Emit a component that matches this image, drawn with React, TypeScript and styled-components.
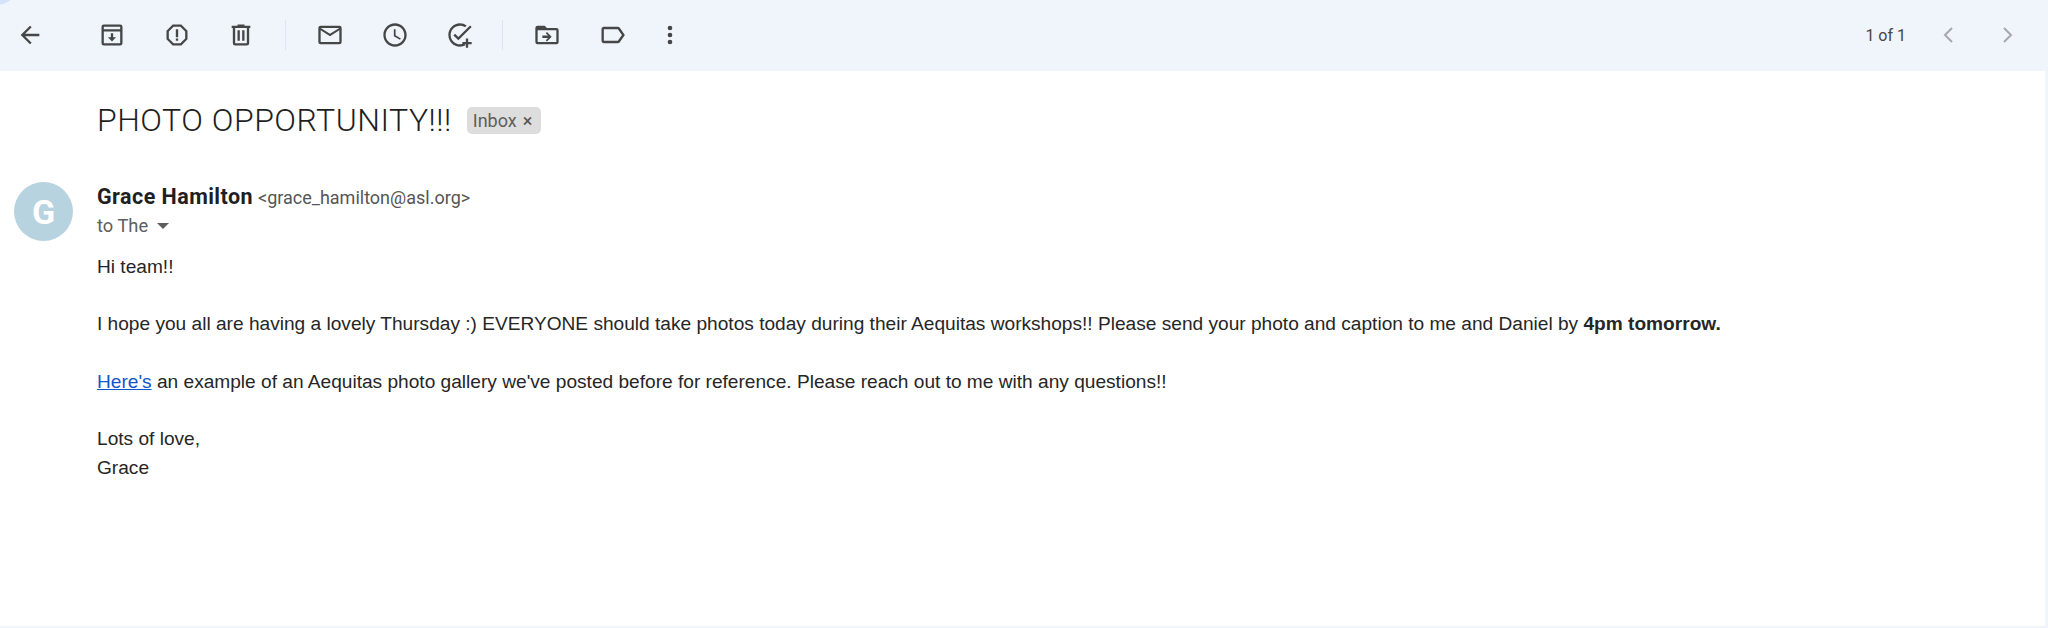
import React from "react";
import styled, { createGlobalStyle } from "styled-components";

const Global = createGlobalStyle`
  html, body { margin: 0; padding: 0; background: #f0f5fb; }
  #root { width: 2048px; height: 628px; overflow: hidden; }
`;

const Page = styled.div`
  position: relative;
  width: 2048px;
  height: 628px;
  background: #f0f5fb;
  overflow: hidden;
  display: flex;
  flex-direction: column;
  font-family: "Liberation Sans", Arial, sans-serif;
`;

const CornerTint = styled.div`
  position: absolute;
  left: -24px;
  top: -28px;
  width: 40px;
  height: 33px;
  border-radius: 50%;
  background: #d3e4f8;
`;

const Toolbar = styled.div`
  position: relative;
  height: 71px;
  box-sizing: border-box;
  padding-bottom: 1px;
  flex: none;
  display: flex;
  align-items: center;
  color: #444746;
`;

const IconSlot = styled.div<{ $w: number }>`
  width: ${(p) => p.$w}px;
  flex: none;
  display: flex;
  justify-content: center;
  align-items: center;
`;

const Separator = styled.div`
  width: 1px;
  height: 30px;
  flex: none;
  background: #dfe5ec;
`;

const Pager = styled.div`
  margin-left: auto;
  padding-right: 12px;
  display: flex;
  align-items: center;
  color: #444746;
`;

const PagerText = styled.span`
  font-family: "Roboto", sans-serif;
  font-size: 16px;
  margin-right: 14px;
`;

const PagerArrow = styled.div`
  width: 58px;
  display: flex;
  justify-content: center;
  color: #a5a8ac;
`;

const Sheet = styled.div`
  flex: 1;
  margin-right: 3px;
  margin-bottom: 2px;
  background: #fff;
  display: flex;
  flex-direction: column;
`;

const SubjectRow = styled.div`
  display: flex;
  align-items: center;
  height: 50px;
  margin-top: 24px;
  padding-left: 97px;
`;

const Subject = styled.h1`
  margin: 0;
  font-family: "Roboto", sans-serif;
  font-weight: 300;
  font-size: 32px;
  line-height: 50px;
  color: #1f1f1f;
  letter-spacing: 0.5px;
`;

const Chip = styled.span`
  margin-left: 15px;
  height: 27px;
  width: 74px;
  box-sizing: border-box;
  border-radius: 5px;
  background: #dddddd;
  color: #5e5e5e;
  font-family: "Roboto", sans-serif;
  font-size: 18px;
  display: flex;
  align-items: center;
  padding-left: 6px;
  gap: 6px;
`;

const ChipClose = styled.span`
  font-size: 18px;
  color: #555;
`;

const Message = styled.div`
  display: flex;
  margin-top: 37px;
  padding-left: 14px;
  gap: 24px;
`;

const Avatar = styled.div`
  width: 59px;
  height: 59px;
  flex: none;
  border-radius: 50%;
  background: #b7d3e0;
  color: #fff;
  font-family: "Roboto", sans-serif;
  font-weight: 700;
  font-size: 34px;
  display: flex;
  align-items: center;
  justify-content: center;
`;

const Content = styled.div`
  flex: 1;
  min-width: 0;
`;

const SenderLine = styled.div`
  height: 29px;
  display: flex;
  align-items: baseline;
  gap: 5px;
  line-height: 29px;
`;

const SenderName = styled.span`
  font-family: "Roboto", sans-serif;
  font-weight: 700;
  font-size: 21.5px;
  letter-spacing: 0.45px;
  color: #1f1f1f;
`;

const SenderMail = styled.span`
  font-family: "Roboto", sans-serif;
  font-size: 18px;
  color: #555;
`;

const ToLine = styled.div`
  height: 29px;
  display: flex;
  align-items: center;
  gap: 9px;
  font-family: "Roboto", sans-serif;
  font-size: 18.3px;
  color: #5e5e5e;
`;

const Caret = styled.span`
  width: 0;
  height: 0;
  border-left: 6px solid transparent;
  border-right: 6px solid transparent;
  border-top: 6px solid #5e5e5e;
`;

const Body = styled.div`
  margin-top: 13px;
  font-size: 19.12px;
  line-height: 28.7px;
  color: #262626;
`;

const Para = styled.p`
  margin: 0 0 28.7px;
`;

const Link = styled.a`
  color: #1155cc;
  text-decoration: underline;
`;

const Ico = ({ children, size = 28 }: { children: React.ReactNode; size?: number }) => (
  <svg width={size} height={size} viewBox="0 0 24 24" fill="currentColor">
    {children}
  </svg>
);

const P = [
  "M20 11H7.83l5.59-5.59L12 4l-8 8 8 8 1.41-1.41L7.83 13H20z",
  "M19 3H5a2 2 0 0 0-2 2v14a2 2 0 0 0 2 2h14a2 2 0 0 0 2-2V5a2 2 0 0 0-2-2zM5 5h14v2H5zm0 14V9h14v10zm8-8.5h-2V14H8.5l3.5 3.5 3.5-3.5H13z",
  "M15.73 3H8.27L3 8.27v7.46L8.27 21h7.46L21 15.73V8.27L15.73 3zM19 14.9 14.9 19H9.1L5 14.9V9.1L9.1 5h5.8L19 9.1v5.8zM11 7h2v7h-2zm0 8h2v2h-2z",
  "M15 4V3H9v1H4v2h1v13a2 2 0 0 0 2 2h10a2 2 0 0 0 2-2V6h1V4h-5zm2 15H7V6h10v13zM9 8h2v9H9zm4 0h2v9h-2z",
  "M20 4H4a2 2 0 0 0-2 2v12a2 2 0 0 0 2 2h16a2 2 0 0 0 2-2V6a2 2 0 0 0-2-2zm0 14H4V8l8 5 8-5v10zm-8-7L4 6h16l-8 5z",
  "M11.99 2C6.47 2 2 6.48 2 12s4.47 10 9.99 10C17.52 22 22 17.52 22 12S17.52 2 11.99 2zM12 20c-4.42 0-8-3.58-8-8s3.58-8 8-8 8 3.58 8 8-3.58 8-8 8zm.5-13H11v6l5.25 3.15.75-1.23-4.5-2.67z",
  "M22 5.18 10.59 16.6l-4.24-4.24 1.41-1.41 2.83 2.83 10-10L22 5.18zM12 20c-4.41 0-8-3.59-8-8s3.59-8 8-8c1.57 0 3.04.46 4.28 1.25l1.45-1.45A9.9 9.9 0 0 0 12 2C6.48 2 2 6.48 2 12s4.48 10 10 10c1.73 0 3.36-.44 4.78-1.22l-1.5-1.5c-1 .46-2.11.72-3.28.72zM19 15h-2v3h-3v2h3v3h2v-3h3v-2h-3v-3z",
  "M20 6h-8l-2-2H4a2 2 0 0 0-2 2v12a2 2 0 0 0 2 2h16a2 2 0 0 0 2-2V8a2 2 0 0 0-2-2zm0 12H4V8h16v10zM12 9.5l-1.06 1.06 1.96 1.94H8v2h4.9l-1.96 1.94L12 17.5l4-4z",
  "M17.03 5.01 5 5c-1.1 0-2 .9-2 2v10c0 1.1.9 2 2 2h12.03c.67 0 1.3-.33 1.65-.84L23 12l-4.32-6.16c-.35-.5-.98-.83-1.65-.83zM17 17H5V7h12l3.55 5L17 17z",
  "M12 8a2 2 0 1 0 0-4 2 2 0 0 0 0 4zm0 2a2 2 0 1 0 0 4 2 2 0 0 0 0-4zm0 6a2 2 0 1 0 0 4 2 2 0 0 0 0-4z",
];

export default function App() {
  return (
    <Page>
      <Global />
      <CornerTint />
      <Toolbar>
        <IconSlot $w={60}><Ico><path d={P[0]} /></Ico></IconSlot>
        <IconSlot $w={19} />
        <IconSlot $w={65}><Ico><path d={P[1]} /></Ico></IconSlot>
        <IconSlot $w={65}><Ico><path d={P[2]} /></Ico></IconSlot>
        <IconSlot $w={64}><Ico><path d={P[3]} /></Ico></IconSlot>
        <IconSlot $w={12} />
        <Separator />
        <IconSlot $w={11} />
        <IconSlot $w={65}><Ico><path d={P[4]} /></Ico></IconSlot>
        <IconSlot $w={65}><Ico><path d={P[5]} /></Ico></IconSlot>
        <IconSlot $w={65}><Ico><path d={P[6]} /></Ico></IconSlot>
        <IconSlot $w={10} />
        <Separator />
        <IconSlot $w={11} />
        <IconSlot $w={65}><Ico><path d={P[7]} /></Ico></IconSlot>
        <IconSlot $w={65}><Ico><path d={P[8]} /></Ico></IconSlot>
        <IconSlot $w={52}><Ico><path d={P[9]} /></Ico></IconSlot>
        <Pager>
          <PagerText>1 of 1</PagerText>
          <PagerArrow>
            <svg width="24" height="24" viewBox="0 0 24 24" fill="none" stroke="currentColor" strokeWidth="2"><path d="M15 5l-7 7 7 7" /></svg>
          </PagerArrow>
          <PagerArrow>
            <svg width="24" height="24" viewBox="0 0 24 24" fill="none" stroke="currentColor" strokeWidth="2"><path d="M9 5l7 7-7 7" /></svg>
          </PagerArrow>
        </Pager>
      </Toolbar>
      <Sheet>
        <SubjectRow>
          <Subject>PHOTO OPPORTUNITY!!!</Subject>
          <Chip>Inbox <ChipClose>×</ChipClose></Chip>
        </SubjectRow>
        <Message>
          <Avatar>G</Avatar>
          <Content>
            <SenderLine>
              <SenderName>Grace Hamilton</SenderName>
              <SenderMail>&lt;grace_hamilton@asl.org&gt;</SenderMail>
            </SenderLine>
            <ToLine>to The <Caret /></ToLine>
            <Body>
              <Para>Hi team!!</Para>
              <Para>
                I hope you all are having a lovely Thursday :) EVERYONE should take photos today during their Aequitas workshops!! Please send your photo and caption to me and Daniel by <b>4pm tomorrow.</b>
              </Para>
              <Para>
                <Link href="#">Here's</Link> an example of an Aequitas photo gallery we've posted before for reference. Please reach out to me with any questions!!
              </Para>
              <Para>Lots of love,<br />Grace</Para>
            </Body>
          </Content>
        </Message>
      </Sheet>
    </Page>
  );
}
